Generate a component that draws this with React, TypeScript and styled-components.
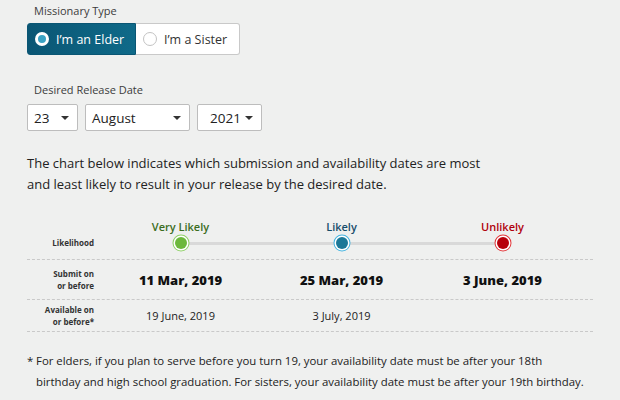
import React from "react";
import styled, { createGlobalStyle } from "styled-components";

const Global = createGlobalStyle`
  html, body { margin: 0; padding: 0; background: #eff0ef; }
  body { font-family: "Open Sans", "Noto Sans", sans-serif; color: #222; }
`;

const Page = styled.div`
  width: 620px;
  height: 400px;
  box-sizing: border-box;
  padding: 3px 0 0 27px;
  display: flex;
  flex-direction: column;
  overflow: hidden;
`;

const FieldLabel = styled.div<{ $top?: number }>`
  font-size: 11px;
  line-height: 16px;
  color: #3c3c3c;
  margin: ${(p) => p.$top ?? 0}px 0 0 7px;
`;

const Toggle = styled.div`
  display: flex;
  margin-top: 4px;
  height: 32px;
`;

const ToggleButton = styled.div<{ $active?: boolean; $w: number }>`
  box-sizing: border-box;
  width: ${(p) => p.$w}px;
  height: 32px;
  display: flex;
  align-items: center;
  gap: 7px;
  padding-left: 7px;
  font-size: 12.5px;
  color: ${(p) => (p.$active ? "#fff" : "#333")};
  background: ${(p) =>
    p.$active ? "linear-gradient(90deg, #0a5674 0%, #0f6a89 100%)" : "#fff"};
  border: 1px solid ${(p) => (p.$active ? "#0a5674" : "#c9c9c9")};
  border-radius: ${(p) => (p.$active ? "3px 0 0 3px" : "0 3px 3px 0")};
  ${(p) => (p.$active ? "" : "border-left: none;")}
`;

const Radio = styled.span<{ $checked?: boolean }>`
  box-sizing: border-box;
  width: 14px;
  height: 14px;
  border-radius: 50%;
  flex: none;
  background: ${(p) => (p.$checked ? "#3aa3c4" : "#fff")};
  border: ${(p) => (p.$checked ? "3px solid #fff" : "1px solid #c3c3c3")};
`;

const SelectRow = styled.div`
  display: flex;
  gap: 7px;
  margin-top: 6px;
`;

const Select = styled.div<{ $w: number; $pl: number }>`
  box-sizing: border-box;
  width: ${(p) => p.$w}px;
  height: 27px;
  background: #fff;
  border: 1px solid #bdbdbd;
  border-radius: 2px;
  display: flex;
  align-items: center;
  justify-content: space-between;
  padding: 0 8px 0 ${(p) => p.$pl}px;
  font-size: 13.5px;
  color: #222;
`;

const Caret = styled.span`
  width: 0;
  height: 0;
  border-left: 4.5px solid transparent;
  border-right: 4.5px solid transparent;
  border-top: 4.5px solid #333;
`;

const Intro = styled.p`
  margin: 22px 0 0 0;
  font-size: 13px;
  line-height: 21px;
  color: #222;
  width: 470px;
`;

const Chart = styled.div`
  margin-top: 18px;
  width: 566px;
  display: flex;
  flex-direction: column;
`;

const ChartRow = styled.div<{ $h: number }>`
  box-sizing: border-box;
  display: grid;
  grid-template-columns: 73px repeat(3, 161px) 10px;
  height: ${(p) => p.$h}px;
  border-bottom: 1px dashed #c9c9c9;
  align-items: center;
`;

const RowLabel = styled.div<{ $alignEnd?: boolean }>`
  text-align: right;
  padding-right: 6px;
  font-size: 8px;
  line-height: 12px;
  font-weight: 700;
  color: #333;
  ${(p) => (p.$alignEnd ? "align-self: end; padding-bottom: 10px;" : "")}
`;

const LikelyCell = styled.div<{ $line: "left" | "right" | "both" }>`
  position: relative;
  display: flex;
  flex-direction: column;
  align-items: center;
  align-self: end;
  padding-bottom: 8px;
  &::before {
    content: "";
    position: absolute;
    bottom: 14.5px;
    height: 3px;
    background: #d9d9d9;
    left: ${(p) => (p.$line === "right" ? "50%" : "0")};
    right: ${(p) => (p.$line === "left" ? "50%" : "0")};
  }
`;

const LikelyTitle = styled.div<{ $color: string }>`
  font-size: 11px;
  line-height: 15px;
  font-weight: 600;
  color: ${(p) => p.$color};
  margin-bottom: 1px;
`;

const Dot = styled.span<{ $fill: string; $ring: string }>`
  position: relative;
  width: 12px;
  height: 12px;
  margin: 2px;
  border-radius: 50%;
  background: ${(p) => p.$fill};
  box-shadow: 0 0 0 1.5px #fff, 0 0 0 2.5px ${(p) => p.$ring};
`;

const SubmitDate = styled.div`
  text-align: center;
  font-size: 13px;
  font-weight: 800;
  color: #111;
`;

const AvailDate = styled.div`
  text-align: center;
  font-size: 11px;
  color: #222;
`;

const Footnote = styled.div`
  margin-top: 18px;
  display: flex;
  font-size: 11.4px;
  line-height: 21px;
  color: #222;
  width: 585px;
  white-space: nowrap;
`;

const Star = styled.span`
  width: 9px;
  flex: none;
`;

const levels = [
  { title: "Very Likely", color: "#3b6d1d", fill: "#6cb83c", ring: "#8fd067", line: "right" as const, submit: "11 Mar, 2019", avail: "19 June, 2019" },
  { title: "Likely", color: "#164c6a", fill: "#1b7898", ring: "#42b3e0", line: "both" as const, submit: "25 Mar, 2019", avail: "3 July, 2019" },
  { title: "Unlikely", color: "#b0000c", fill: "#b7000b", ring: "#e2363a", line: "left" as const, submit: "3 June, 2019", avail: "" },
];

export default function App() {
  return (
    <>
      <Global />
      <Page>
        <FieldLabel>Missionary Type</FieldLabel>
        <Toggle>
          <ToggleButton $active $w={109}>
            <Radio $checked />
            I’m an Elder
          </ToggleButton>
          <ToggleButton $w={104}>
            <Radio />
            I’m a Sister
          </ToggleButton>
        </Toggle>

        <FieldLabel $top={27}>Desired Release Date</FieldLabel>
        <SelectRow>
          <Select $w={51} $pl={6}>
            23 <Caret />
          </Select>
          <Select $w={105} $pl={6}>
            August <Caret />
          </Select>
          <Select $w={65} $pl={12}>
            2021 <Caret />
          </Select>
        </SelectRow>

        <Intro>
          The chart below indicates which submission and availability dates are most and least
          likely to result in your release by the desired date.
        </Intro>

        <Chart>
          <ChartRow $h={47}>
            <RowLabel $alignEnd>Likelihood</RowLabel>
            {levels.map((l) => (
              <LikelyCell key={l.title} $line={l.line}>
                <LikelyTitle $color={l.color}>{l.title}</LikelyTitle>
                <Dot $fill={l.fill} $ring={l.ring} />
              </LikelyCell>
            ))}
          </ChartRow>
          <ChartRow $h={40}>
            <RowLabel>
              Submit on
              <br />
              or before
            </RowLabel>
            {levels.map((l) => (
              <SubmitDate key={l.title}>{l.submit}</SubmitDate>
            ))}
          </ChartRow>
          <ChartRow $h={32}>
            <RowLabel>
              Available on
              <br />
              or before*
            </RowLabel>
            {levels.map((l) => (
              <AvailDate key={l.title}>{l.avail}</AvailDate>
            ))}
          </ChartRow>
        </Chart>

        <Footnote>
          <Star>*</Star>
          <span>
            For elders, if you plan to serve before you turn 19, your availability date must be
            after your 18th
            <br />
            birthday and high school graduation. For sisters, your availability date must be after
            your 19th birthday.
          </span>
        </Footnote>
      </Page>
    </>
  );
}
